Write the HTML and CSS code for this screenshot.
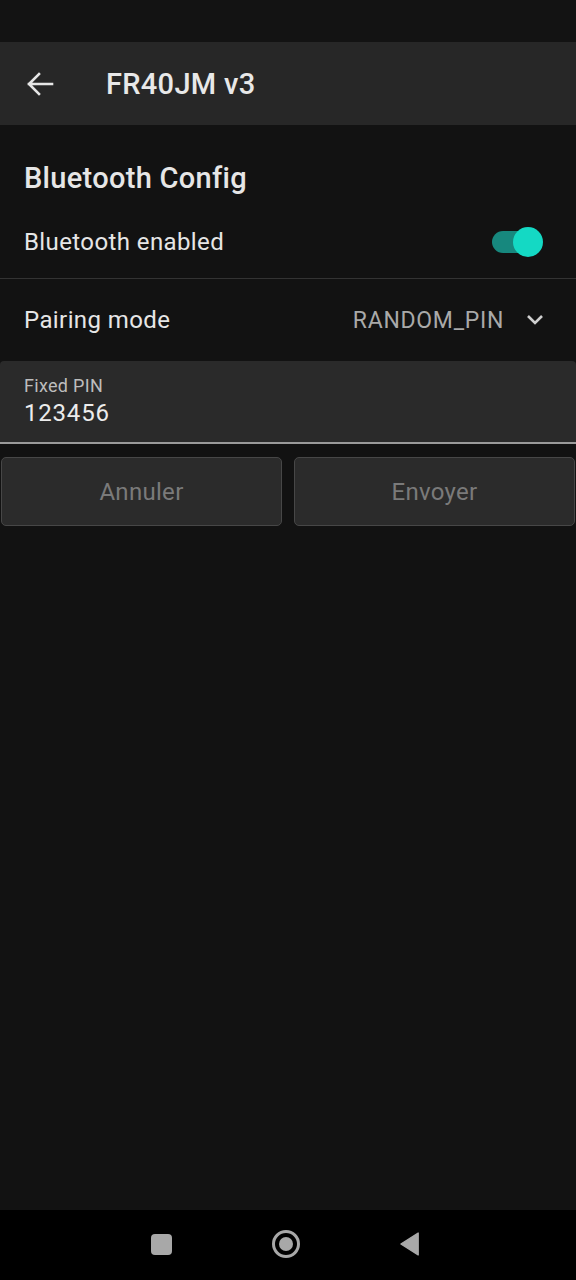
FILE: index.html
```html
<!DOCTYPE html>
<html lang="fr">
<head>
<meta charset="utf-8">
<link rel="stylesheet" href="styles.css">
</head>
<body>
<div class="screen">
  <div class="status"></div>
  <header class="appbar">
    <svg class="back" width="28" height="24" viewBox="0 0 28 24"><path d="M26 12H3M13 2L3 12l10 10" fill="none" stroke="#e6e6e6" stroke-width="2.6" stroke-linecap="square"/></svg>
    <h1 class="title">FR40JM v3</h1>
  </header>
  <main class="content">
    <h2 class="section">Bluetooth Config</h2>
    <div class="row row-switch">
      <span class="label">Bluetooth enabled</span>
      <span class="switch"><span class="thumb"></span></span>
    </div>
    <div class="row row-select">
      <span class="label">Pairing mode</span>
      <span class="select">RANDOM_PIN
        <svg class="chev" width="18" height="12" viewBox="0 0 18 12"><path d="M2 2l7 7 7-7" fill="none" stroke="#cfcfcf" stroke-width="2.6"/></svg>
      </span>
    </div>
    <div class="field">
      <div class="field-label">Fixed PIN</div>
      <div class="field-value">123456</div>
    </div>
    <div class="actions">
      <button class="btn">Annuler</button>
      <button class="btn">Envoyer</button>
    </div>
  </main>
  <nav class="navbar">
    <span class="nav-square"></span>
    <span class="nav-circle"><span class="nav-dot"></span></span>
    <svg class="nav-back" width="22" height="26" viewBox="0 0 22 26"><path d="M20 1v24L1 13z" fill="#a8a8a8" stroke="#a8a8a8" stroke-linejoin="round" stroke-width="1.5"/></svg>
  </nav>
</div>
</body>
</html>
```
FILE: styles.css
```css
* { box-sizing: border-box; }
html, body { margin: 0; padding: 0; background: #121212; }
body { font-family: Roboto, "Noto Sans", sans-serif; color: #e6e6e6; }
.screen { width: 576px; height: 1280px; display: flex; flex-direction: column; }
.status { height: 42px; background: #131313; flex: none; }
.appbar { height: 83px; flex: none; background: #272727; display: flex; align-items: center; padding-left: 26px; }
.back { display: block; }
.title { margin: 0 0 0 52px; font-size: 29px; font-weight: 500; color: #e8e8e8; letter-spacing: 0.3px; }
.content { flex: 1; background: #121212; display: flex; flex-direction: column; }
.section { margin: 37px 0 12px 24px; font-size: 29px; line-height: 32px; font-weight: 500; color: #e6e6e6; letter-spacing: 0.3px; }
.row { display: flex; align-items: center; justify-content: space-between; padding: 0 33px 0 24px; }
.label { font-size: 24px; color: #e6e6e6; letter-spacing: 0.4px; }
.row-switch { height: 73px; border-bottom: 1px solid #333; }
.row-select { height: 82px; padding-right: 32px; }
.switch { position: relative; width: 50px; height: 22px; border-radius: 11px; background: #17887e; margin-right: 1px; }
.thumb { position: absolute; right: -1px; top: -4px; width: 30px; height: 30px; border-radius: 50%; background: #14d9c4; }
.select { display: flex; align-items: center; gap: 22px; font-size: 23px; color: #a9a9a9; letter-spacing: 0.7px; }
.chev { display: block; }
.field { height: 83px; background: #2a2a2a; border-radius: 4px 4px 0 0; border-bottom: 2px solid #9a9a9a; padding: 14px 24px 0; }
.field-label { font-size: 18px; line-height: 22px; color: #bdbdbd; letter-spacing: 0.3px; }
.field-value { font-size: 24px; line-height: 30px; color: #ececec; letter-spacing: 0.8px; margin-top: 1px; }
.actions { display: flex; gap: 12px; margin: 13px 1px 0; }
.btn { flex: 1; height: 69px; background: #2b2b2b; border: 1.5px solid #474747; border-radius: 5px; font-family: Roboto, sans-serif; font-size: 24px; color: #7a7a7a; letter-spacing: 0.3px; }
.navbar { height: 70px; flex: none; background: #000; display: flex; align-items: center; justify-content: center; padding: 0 5px 2px 0; }
.nav-square { width: 21px; height: 21px; border-radius: 4px; background: #a8a8a8; margin-right: 100px; }
.nav-circle { width: 28px; height: 28px; border-radius: 50%; border: 3px solid #a8a8a8; display: flex; align-items: center; justify-content: center; margin-right: 100px; }
.nav-dot { width: 14px; height: 14px; border-radius: 50%; background: #a8a8a8; }
.nav-back { display: block; width: 20px; height: 24px; }
```
